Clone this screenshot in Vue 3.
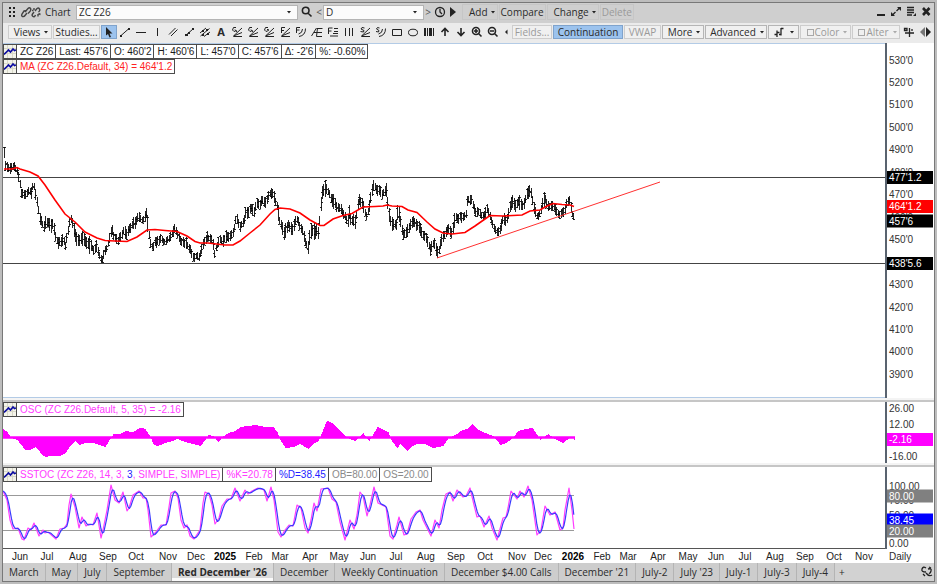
<script setup>
const tools = [
  { name: 'Line', d: 'M2.500 11 11 3.500', fill: 'M2 10h2v2h-2zM10 3h2v2h-2z' },
  { name: 'Horizontal line', d: 'M2 7.500H12' },
  { name: 'Vertical line', d: 'M7.500 3V11' },
  { name: 'Parallel lines', d: 'M3 9.500 9.500 3M5 11 11.500 4.500' },
  { name: 'Segment', d: 'M3 11 11 4', fill: 'M3 9h3v2h-3zM6 7h2v2h-2zM10 3h2v2h-2z' },
  { name: 'Channel', d: 'M2 8 8 3M2.500 11 11.500 3.500M6 11.500 12 7', fill: 'M4 5h2v2h-2zM8 4h2v2h-2zM4 9h2v2h-2zM9 8h2v2h-2z' },
  { name: 'Text', letter: 'A' },
  { name: 'Speed fan', d: 'M3.500 11 12 3M3.500 11 12 7.500M3.500 11.500H12M6 2.500H3.500L2.500 5 4 6.500 6.500 5.500M5 4.500 7 7' },
  { name: 'Percent fan', d: 'M3.500 11 12 3M3.500 11 12 7.500M3.500 11.500H12M6 2.500H3.500L2.500 5 4 6.500 6.500 5.500M5 4.500 7 7' },
  { name: 'Gann fan', d: 'M3.500 11 12 3M3.500 11 12 7.500M3.500 11.500H12M6 2.500H3.500L2.500 5 4 6.500 6.500 5.500V4.500H5' },
  { name: 'Fibonacci fan', d: 'M3.500 11 12 3M3.500 11 12 7.500M3.500 11.500H12M3.500 8V2.500H7M3.500 5.500H6' },
  { name: 'Fibonacci arcs', d: 'M2.500 8V2.500H6M2.500 5H5.500M11.500 3.500Q11.500 10.500 5 11.500M8.500 4Q8.500 8 4.500 9' },
  { name: 'Andrews fork', d: 'M1.500 11 6.500 3M4 7.500H7.500M7.500 3 6.500 11.500M7 3.500H12.500M7 7.500H12M6.500 11.500H12' },
  { name: 'Fibonacci retracement', d: 'M2.500 9V3H6.500M2.500 6H5.500M8 3.500H12M8 6.500H12M7 8.500H12M4 11H12' },
  { name: 'Cycle lines', d: 'M3.500 3V11M7.500 3V11M10.500 3V11' },
  { name: 'Speed resistance fan', d: 'M3.500 11 12 3M3.500 11 12 7.500M3.500 11.500H12M6.500 3 4 2.500 3 4 6 5.500 5.500 7 2.500 6.500' },
  { name: 'Speed resistance arcs', d: 'M5.500 3 3.500 2.500 2.500 4 5 5.500 4.500 7 2 6.500M11.500 3.500Q11.500 10.500 5 11.500M8.500 4Q8.500 8 4.500 9' },
  { name: 'Rectangle', d: 'M2.500 4.500H11.500V10.500H2.500Z' },
  { name: 'Ellipse', d: 'M2.500 7.500A4.500 3.300 0 0 1 11.500 7.500A4.500 3.300 0 0 1 2.500 7.500Z' },
  { name: 'Time bars', d: 'M11.500 3V11', fill: 'M2 3h2v8h-2zM5 3h1v8h-1zM7 3h3v8h-3z' },
  { name: 'Up arrow', d: 'M7 11V4M3.500 7 7 3.500 10.500 7', heavy: true },
  { name: 'Down arrow', d: 'M7 3V10M3.500 7 7 10.500 10.500 7', heavy: true },
  { name: 'Zoom in', d: 'M9.500 6A3.500 3.500 0 1 1 2.500 6A3.500 3.500 0 1 1 9.500 6ZM4 6H8M6 4V8M8.500 8.500 11.500 11.500', heavy: true },
  { name: 'Zoom out', d: 'M9.500 6A3.500 3.500 0 1 1 2.500 6A3.500 3.500 0 1 1 9.500 6ZM4 6H8M8.500 8.500 11.500 11.500', heavy: true },
]

const quote = ['ZC Z26', "Last: 457'6", "O: 460'2", "H: 460'6", "L: 457'0", "C: 457'6", "Δ: -2'6", '%: -0.60%']

const tabs = ['March', 'May', 'July', 'September', "Red December '26", 'December', 'Weekly Continuation',
  'December $4.00 Calls', "December '21", 'July-2', "July '23", 'July-1', 'July-3', 'July-4']
const activeTab = "Red December '26"

const months = [['Jun', 20], ['Jul', 47], ['Aug', 78], ['Sep', 108], ['Oct', 136], ['Nov', 168], ['Dec', 196],
  ['2025', 225], ['Feb', 254], ['Mar', 280], ['Apr', 310], ['May', 339], ['Jun', 368], ['Jul', 396], ['Aug', 426],
  ['Sep', 456], ['Oct', 485], ['Nov', 517], ['Dec', 543], ['2026', 573], ['Feb', 602], ['Mar', 628], ['Apr', 658],
  ['May', 688], ['Jun', 716], ['Jul', 745], ['Aug', 775], ['Sep', 805], ['Oct', 834], ['Nov', 864]]
const monthX = (x) => ((x - 3) / 882) * 100 + '%'

/* The three panes share one canvas coordinate system. */
const panes = {
  price: { top: 43, height: 355 },
  osc: { top: 402, height: 61 },
  stoch: { top: 467, height: 82 },
}
const pct = (pane, y) => ((y - pane.top) / pane.height) * 100 + '%'
const box = (pane) => `3 ${pane.top} 882 ${pane.height}`

const priceLabels = Array.from({ length: 15 }, (_, i) => ({ text: `${530 - i * 10}'0`, y: 59.5 + i * 22.46 }))
  .filter((l) => l.text !== "440'0")
const priceTags = [
  { text: "477'1.2", y: 177, color: '#000' },
  { text: "457'6", y: 220.5, color: '#000' },
  { text: "464'1.2", y: 206, color: '#f00' },
  { text: "438'5.6", y: 263, color: '#000' },
]
const oscLabels = [{ text: '26.00', y: 408.5 }, { text: '12.00', y: 424.5 }, { text: '-16.00', y: 456.5 }]
const oscTags = [{ text: '-2.16', y: 439, color: '#f0f' }]
const stochLabels = [{ text: '100.00', y: 485.5 }, { text: '75.00', y: 500.5 }, { text: '50.00', y: 514.5 }, { text: '0.00', y: 542.5 }]
const stochTags = [
  { text: '80.00', y: 495.5, color: '#808080' },
  { text: '38.45', y: 519.5, color: '#00f' },
  { text: '20.00', y: 530.5, color: '#808080' },
]
const axes = {
  price: { pane: panes.price, labels: priceLabels, tags: priceTags },
  osc: { pane: panes.osc, labels: oscLabels, tags: oscTags },
  stoch: { pane: panes.stoch, labels: stochLabels, tags: stochTags },
}

const pairs = (text) => text.trim().split(/\s+/).map((p) => p.split(',').map(Number))
const STEP = 1.42

function at(points, x, col = 1) {
  if (x <= points[0][0]) return points[0][col]
  for (let i = 1; i < points.length; i++) {
    if (x <= points[i][0]) {
      const a = points[i - 1]
      const b = points[i]
      return a[col] + ((b[col] - a[col]) * (x - a[0])) / (b[0] - a[0])
    }
  }
  return points[points.length - 1][col]
}

/* x, high, low */
const range = pairs(`
4,149,156 5,158,170 7,164,173 9,164,173 11,163,173 13,163,168 15,165,172 17,168,174 19,178,185 21,188,196 23,192,199
25,192,198 27,187,196 29,188,193 31,188,198 33,180,186 34,184,192 36,192,205 38,205,216 40,214,228 42,218,229
44,219,230 46,210,232 48,216,230 50,219,232 53,220,230 55,228,242 57,235,249 59,238,248 61,238,246 63,234,244
65,244,249 67,230,240 69,220,228 71,215,222 73,222,232 75,230,242 77,235,247 79,236,246 82,232,244 84,233,243
86,236,248 88,232,256 90,240,251 92,244,252 94,250,256 96,240,250 98,248,256 100,255,262 102,256,263 104,248,255
106,246,252 108,238,246 110,228,237 112,226,236 114,235,241 116,236,243 118,236,246 120,230,242 122,229,238
124,222,236 126,230,243 128,225,233 130,226,232 132,219,230 134,218,228 136,215,226 138,210,220 140,213,221
142,217,224 144,213,222 146,206,220 148,222,235 150,236,248 152,245,250 154,238,248 156,237,246 158,235,244
160,235,241 163,238,243 165,239,244 167,237,243 170,234,241 173,226,234 175,225,232 177,228,238 179,236,243
181,239,244 184,238,246 186,239,247 188,243,250 190,247,254 192,252,258 194,254,260 196,253,259 198,254,260
200,250,257 201,247,256 203,240,247 205,238,244 207,233,240 209,235,241 211,236,243 213,242,250 214,251,259
216,244,249 218,240,247 220,236,243 222,236,246 224,232,245 226,231,245 228,232,240 230,232,240 232,231,238
234,222,232 236,213,224 238,219,226 240,222,231 242,220,227 244,214,224 246,207,215 248,209,222 250,205,213
252,204,213 254,204,218 256,200,210 258,200,208 260,199,207 262,194,206 264,198,206 266,199,206 268,193,199
270,190,198 272,187,196 274,192,202 276,200,208 278,206,220 280,216,230 282,222,236 284,225,240 286,223,235
288,220,228 290,220,234 292,224,234 294,220,231 296,214,224 298,219,226 300,223,230 302,227,235 304,233,243
306,240,250 308,240,252 310,226,242 312,223,235 314,225,240 316,224,237 318,226,240 320,205,225 321,187,205
323,184,196 325,182,195 327,186,193 329,190,198 331,193,206 333,194,208 335,198,208 337,204,214 339,203,212
341,204,214 343,211,218 345,212,222 347,218,228 349,206,220 351,216,226 353,214,228 355,218,229 357,206,212
358,194,206 360,195,205 362,199,208 364,206,215 366,210,220 368,205,215 370,195,205 372,184,198 374,178,190
376,186,196 378,187,195 380,186,195 382,188,200 384,188,196 386,180,198 388,205,215 390,215,226 392,218,231
394,220,230 396,218,230 398,199,220 400,214,225 402,227,237 404,230,240 406,228,240 408,222,235 410,219,230
412,217,227 414,218,226 416,220,230 418,222,230 420,224,234 422,229,238 424,233,240 426,235,242 428,238,248
430,246,258 432,240,250 434,238,246 436,243,257 438,249,258 440,238,249 442,233,243 444,232,241 446,227,235
448,224,232 450,226,236 452,228,238 454,215,228 456,210,220 458,216,224 460,213,221 462,213,222 464,213,220
466,208,217 467,196,205 469,195,203 471,194,203 473,202,210 475,207,217 477,206,215 479,210,217 481,212,219
483,214,220 485,210,218 487,205,213 489,212,220 491,217,223 493,222,229 495,228,233 497,230,236 499,228,234
501,220,230 503,214,222 505,215,225 507,213,222 509,205,213 511,195,208 513,197,208 515,201,210 517,198,206
519,196,208 521,200,209 523,200,210 525,195,203 527,188,199 529,186,197 531,188,200 533,197,210 535,208,218
537,213,220 539,212,218 541,203,212 543,194,206 545,193,203 547,200,210 549,202,210 551,202,212 553,201,210
555,204,212 557,208,216 559,213,220 561,210,217 563,208,216 565,204,212 567,198,204 569,197,205 571,205,213
572,211,216 574,214,222`)

const bars = (() => {
  let d = ''
  let i = 0
  for (let x = 4.5; x <= 575; x += STEP, i++) {
    const r1 = Math.abs(Math.sin(i * 12.9898) * 43758.5453) % 1
    const r2 = Math.abs(Math.sin(i * 78.233) * 12543.123) % 1
    const hi = at(range, x - 0.5, 1)
    const lo = at(range, x - 0.5, 2)
    const span = lo - hi
    const top = Math.round(hi + span * 0.4 * r1 - 2)
    const end = Math.round(lo - span * 0.4 * r2 + 2)
    const px = Math.floor(x) + 0.5
    const close = Math.round(top + (end - top) * r2) + 0.5
    const open = Math.round(top + (end - top) * r1) + 0.5
    d += `M${px} ${top}V${end}M${px} ${close}h1.500M${px} ${open}h-1.500`
  }
  return d
})()

const average = `4,169 12,169 17,167.5 20,169 30,172 38,176 45,185 55,200 65,214 75,222 85,232 97,238 105,240.5 115,241
127,241.5 137,237 147,230 155,229.5 165,230.5 177,231.5 187,236 195,241.500 200,243 208,243 225,245 233,245 240,241
250,233 260,225 270,214 275,209.500 280,208 290,209 300,213 310,220 320,225.500 324,225.500 333,219 343,215.500
352,213.500 363,207 375,206.500 383,206 387,205 392,206 402,206.500 408,210 417,212.500 427,222 435,229 443,233
452,234 465,232.500 475,226 485,219 490,215.500 503,216 522,215 530,211 540,210 547,206 553,203.500 562,204.500
570,205 574,206.500`

const oscPoints = pairs(`3,429 7,432 11,438 17,440 20,444 25,450 30,450 35,447 38,450 42,455 45,457 50,456 60,456
65,453 70,446 75,441 79,445 85,443 93,443 105,447 108,442 113,434 120,434 125,431 133,432 140,427.5 145,429
150,437 153,444 157,446 165,443 172,441 177,439 185,442 200,446 205,440 208,435 213,436 218,442 222,437 228,433
235,431 240,427 255,425 265,427 273,427 277,432 280,440 285,448 293,447 300,444 303,446 308,449 313,444 318,441
322,432 325,424 327,420.5 332,423 340,431 347,438 355,441 360,436 363,433 366,438 369,441 372,436 377,427 382,429
388,432 392,442 397,448 400,444 403,447 407,451 412,446 417,444 425,444 433,448 443,446 448,438 455,435 462,430
467,429 472,423.5 478,430 485,433 493,436 500,445 506,443 512,438 518,431 525,429 532,428 537,435 540,440 545,436
548,434 553,438 563,443 570,437 573,438 575,441`)
const oscPath = (() => {
  let d = 'M3 437.5'
  for (let x = 3; x <= 574; x += 1) d += `L${x} ${Math.round(at(oscPoints, x))}h1`
  return d + 'V437.500Z'
})()

const kPoints = pairs(`3,491 7,500 10,520 13,529 18,528 22,539 24,540 28,528 31,530 34,523 39,536 43,530 45,533 48,532
56,539 60,529 64,528 67,524 69,505 71,494 75,507 79,528 82,517 86,526 89,524 93,525 97,513 101,538 103,530 107,510
111,485 115,500 119,503 123,492 127,511 129,508 133,495 139,491 143,498 146,498 148,510 151,537 156,532 161,525
166,525 169,507 171,493 175,491 178,498 181,520 184,528 187,525 190,536 194,539 200,530 203,503 205,492 209,494
212,505 215,524 219,518 222,506 227,499 231,499 235,488 240,501 245,490 248,494 252,491 258,488 264,490 267,501
271,487 274,500 278,532 281,537 285,530 289,525 293,526 297,505 301,508 305,528 308,533 311,520 314,503 317,511
319,500 321,489 328,488 332,499 336,502 340,522 345,540 350,520 354,529 357,515 360,492 363,496 367,516 370,505
374,487 378,503 386,507 390,536 393,539 397,525 399,517 404,535 407,534 411,519 416,512 420,510 423,520 431,536
435,520 439,528 442,510 446,494 450,492 453,501 457,490 463,497 466,496 470,488 474,505 477,517 480,516 484,527
489,516 492,528 497,540 503,518 506,517 508,508 511,491 517,499 520,491 524,497 528,486 532,500 537,535 541,530
545,506 550,515 555,512 560,530 563,528 565,510 569,488 572,510 574,529`)
const kLine = kPoints.map((p) => p.join(',')).join(' ')
const dLine = (() => {
  const out = []
  for (let x = 3; x <= 574.5; x += STEP) {
    const y = (at(kPoints, x) + at(kPoints, x - STEP) + at(kPoints, x - 2 * STEP)) / 3
    out.push(`${x.toFixed(1)},${y.toFixed(1)}`)
  }
  return out.join(' ')
})()
</script>

<template>
  <div class="frame">
    <main class="window">
      <header class="title-bar">
        <svg class="ico grip" viewBox="0 0 14 14" aria-hidden="true">
          <path class="solid" d="M4 2h2v2H4zM8 2h2v2H8zM4 6h2v2H4zM8 6h2v2H8zM4 10h2v2H4zM8 10h2v2H8z" />
        </svg>
        <svg class="links" viewBox="0 0 22 14" aria-hidden="true">
          <path d="M5 7 8 3.500Q9.500 2 10.500 3.500T9.500 7L8 8.500M7 5.500 4 6 2 9Q1 11 2.500 11.500T5 10.500L7 8" />
          <path d="M15 6 17 3.500Q18.500 2.500 19.500 4T18.500 7M14 7 12.500 9Q11.500 10.500 13 11.500T15.500 10M14 3V5M12 5.500H13.500M18 9V11.500M18.500 8.500 20.500 9.500" />
        </svg>
        <span class="name">Chart</span>
        <label class="combo symbol">
          <select aria-label="Symbol"><option>ZC Z26</option></select>
          <svg class="caret" viewBox="0 0 6 4" aria-hidden="true"><path d="M1 1H5L3 3.500Z" /></svg>
        </label>
        <button class="plain search" aria-label="Search">
          <svg class="ico" viewBox="0 0 14 14"><path class="thick" d="M9 5.500A3.300 3.300 0 1 1 2.400 5.500A3.300 3.300 0 1 1 9 5.500ZM8.200 8.200 11.500 11.500" /></svg>
        </button>
        <button class="step" aria-label="Previous interval">&lt;</button>
        <label class="combo interval">
          <select aria-label="Interval"><option>D</option></select>
          <svg class="caret" viewBox="0 0 6 4" aria-hidden="true"><path d="M1 1H5L3 3.500Z" /></svg>
        </label>
        <button class="step" aria-label="Next interval">&gt;</button>
        <button class="plain" aria-label="History">
          <svg class="ico" viewBox="0 0 14 14"><path class="mid" d="M11.500 7A4.500 4.500 0 1 1 2.500 7A4.500 4.500 0 1 1 11.500 7ZM7 4V7L9 9" /></svg>
        </button>
        <button class="plain play" aria-label="Play">
          <svg class="ico" viewBox="0 0 14 14"><path class="solid" d="M4 2 10 7 4 12Z" /></svg>
        </button>
        <div class="actions">
          <button class="flat wide">Add<svg class="caret" viewBox="0 0 6 4"><path d="M1 1H5L3 3.500Z" /></svg></button>
          <button class="flat">Compare</button>
          <button class="flat wide">Change<svg class="caret" viewBox="0 0 6 4"><path d="M1 1H5L3 3.500Z" /></svg></button>
          <button class="flat" disabled>Delete</button>
        </div>
        <div class="controls">
          <button class="plain" aria-label="Minimize"><svg class="ico" viewBox="0 0 14 14"><path class="solid" d="M3 9H11V11H3Z" /></svg></button>
          <button class="plain" aria-label="Maximize"><svg class="ico" viewBox="0 0 14 14"><path class="mid" d="M7.500 6 11 2.500M3 10.500 6.500 7" /><path class="solid" d="M8 2H12V6ZM2 7V11H6Z" /></svg></button>
          <button class="plain" aria-label="Menu"><svg class="ico" viewBox="0 0 14 14"><path class="mid" d="M3 2.500H10M3 5H10M3 7.500H10M3 10H8" /><path class="solid" d="M12 8V11H9Z" /></svg></button>
          <button class="plain" aria-label="Close"><svg class="ico" viewBox="0 0 14 14"><path class="fat" d="M4 3 10.500 10M10.500 3 4 10" /></svg></button>
        </div>
      </header>

      <nav class="toolbar" aria-label="Chart tools">
        <button class="boxed views">Views<svg class="caret" viewBox="0 0 6 4"><path d="M1 1H5L3 3.500Z" /></svg></button>
        <button class="boxed studies">Studies...</button>
        <button class="tool selected" aria-label="Select">
          <svg class="ico" viewBox="0 0 14 14"><path class="solid" d="M4 2V10.500L6 9 7.500 12.500 9 12 7.500 8.500H10.500Z" /></svg>
        </button>
        <button v-for="t in tools" :key="t.name" class="tool" :aria-label="t.name">
          <span v-if="t.letter" class="letter">{{ t.letter }}</span>
          <svg v-else class="ico" viewBox="0 0 14 14">
            <path :class="{ thick: t.heavy }" :d="t.d" />
            <path v-if="t.fill" class="solid" :d="t.fill" />
          </svg>
        </button>
        <svg class="back" viewBox="0 0 6 10" aria-hidden="true"><path class="solid" d="M4.500 2.500V7.500L2 5Z" /></svg>
        <button class="boxed fields" disabled>Fields...</button>
        <button class="boxed continuation">Continuation</button>
        <button class="boxed vwap" disabled>VWAP</button>
        <button class="boxed more">More<svg class="caret" viewBox="0 0 6 4"><path d="M1 1H5L3 3.500Z" /></svg></button>
        <button class="boxed advanced">Advanced<svg class="caret" viewBox="0 0 6 4"><path d="M1 1H5L3 3.500Z" /></svg></button>
        <button class="boxed bar-style" aria-label="Bar style">
          <svg class="ico" viewBox="0 0 14 14"><path class="mid" d="M5 5.500V12M2.500 9.500H5M5 7.500H7.500M9 3V10.500M7 9.500H9M9 3.500H11.500" /></svg>
          <svg class="caret" viewBox="0 0 6 4"><path d="M1 1H5L3 3.500Z" /></svg>
        </button>
        <label class="boxed check color"><input type="checkbox" disabled />Color<svg class="caret" viewBox="0 0 6 4"><path d="M1 1H5L3 3.500Z" /></svg></label>
        <label class="boxed check alter"><input type="checkbox" disabled />Alter<svg class="caret" viewBox="0 0 6 4"><path d="M1 1H5L3 3.500Z" /></svg></label>
        <button class="tool crosshair" aria-label="Crosshair">
          <svg class="ico" viewBox="0 0 14 14"><path class="mid" d="M7.500 3V12M3 8H12M2.500 3.500H5V5.500H2.500ZM10 4V6" /></svg>
        </button>
        <button class="tool scroll" aria-label="Scroll tools">
          <svg class="ico" viewBox="0 0 14 14"><path class="dim" d="M6 2V12L1 7Z" /><path class="solid" d="M7 2V12L12 7Z" /></svg>
        </button>
      </nav>

      <section class="pane price">
        <div class="plot outlined">
          <svg class="canvas" :viewBox="box(panes.price)" preserveAspectRatio="none" role="img" aria-label="Price chart">
            <path class="level" d="M3 177.500H885M3 263.500H885" />
            <path class="bars" :d="bars" />
            <polyline class="average" :points="average" />
            <path class="trend" d="M437 258 660 182" />
          </svg>
          <div class="legends">
            <div class="legend">
              <span class="cell mark"><svg viewBox="0 0 12 13"><path class="grid" d="M0 3.500H12M0 8.500H12M3.500 0V13M8.500 0V13" /><path class="wave" d="M0 9.500 3 6.500 4.500 5 6.500 7 9 4 10.500 5.500 12 5" /></svg></span>
              <span v-for="q in quote" :key="q" class="cell">{{ q }}</span>
            </div>
            <div class="legend red">
              <span class="cell mark"><svg viewBox="0 0 12 13"><path class="grid" d="M0 3.500H12M0 8.500H12M3.500 0V13M8.500 0V13" /><path class="wave" d="M0 9.500 3 6.500 4.500 5 6.500 7 9 4 10.500 5.500 12 5" /></svg></span>
              <span class="cell">MA (ZC Z26.Default, 34) = 464'1.2</span>
            </div>
          </div>
        </div>
        <svg class="axis">
          <text v-for="l in axes.price.labels" :key="l.text" x="2" :y="pct(panes.price, l.y)" dy="4">{{ l.text }}</text>
          <g v-for="t in axes.price.tags" :key="t.text">
            <rect x="0" :y="pct(panes.price, t.y - 6)" width="46" height="13" :fill="t.color" />
            <text class="on" x="2" :y="pct(panes.price, t.y)" dy="4">{{ t.text }}</text>
          </g>
        </svg>
      </section>

      <div class="splitter"></div>

      <section class="pane osc">
        <div class="plot">
          <svg class="canvas" :viewBox="box(panes.osc)" preserveAspectRatio="none" role="img" aria-label="Oscillator">
            <path class="histogram" :d="oscPath" />
            <path class="zero" d="M3 437.500H575" />
          </svg>
          <div class="legends">
            <div class="legend pink">
              <span class="cell mark"><svg viewBox="0 0 12 13"><path class="grid" d="M0 3.500H12M0 8.500H12M3.500 0V13M8.500 0V13" /><path class="wave" d="M0 9.500 3 6.500 4.500 5 6.500 7 9 4 10.500 5.500 12 5" /></svg></span>
              <span class="cell">OSC (ZC Z26.Default, 5, 35) = -2.16</span>
            </div>
          </div>
        </div>
        <svg class="axis">
          <text v-for="l in axes.osc.labels" :key="l.text" x="2" :y="pct(panes.osc, l.y)" dy="3">{{ l.text }}</text>
          <g v-for="t in axes.osc.tags" :key="t.text">
            <rect x="0" :y="pct(panes.osc, t.y - 6)" width="46" height="13" :fill="t.color" />
            <text class="on" x="2" :y="pct(panes.osc, t.y)" dy="4">{{ t.text }}</text>
          </g>
        </svg>
      </section>

      <div class="splitter"></div>

      <section class="pane stoch">
        <div class="plot">
          <svg class="canvas" :viewBox="box(panes.stoch)" preserveAspectRatio="none" role="img" aria-label="Slow stochastic">
            <path class="bound" d="M3 495.500H574M3 530.500H574" />
            <polyline class="k" :points="kLine" />
            <polyline class="d" :points="dLine" />
          </svg>
          <div class="legends">
            <div class="legend pink">
              <span class="cell mark"><svg viewBox="0 0 12 13"><path class="grid" d="M0 3.500H12M0 8.500H12M3.500 0V13M8.500 0V13" /><path class="wave" d="M0 9.500 3 6.500 4.500 5 6.500 7 9 4 10.500 5.500 12 5" /></svg></span>
              <span class="cell">SSTOC (ZC Z26, 14, 3, <span class="blue">3</span>, SIMPLE, SIMPLE)</span>
              <span class="cell">%K=20.78</span>
              <span class="cell blue">%D=38.45</span>
              <span class="cell grey">OB=80.00</span>
              <span class="cell grey">OS=20.00</span>
            </div>
          </div>
        </div>
        <svg class="axis">
          <text v-for="l in axes.stoch.labels" :key="l.text" x="2" :y="pct(panes.stoch, l.y)" dy="4">{{ l.text }}</text>
          <g v-for="t in axes.stoch.tags" :key="t.text">
            <rect x="0" :y="pct(panes.stoch, t.y - 6)" width="46" height="13" :fill="t.color" />
            <text class="on" x="2" :y="pct(panes.stoch, t.y)" dy="4">{{ t.text }}</text>
          </g>
        </svg>
      </section>

      <div class="dates">
        <svg class="months">
          <text v-for="(m, i) in months" :key="i" :class="{ year: m[0].startsWith('20') }" :x="monthX(m[1])" y="11">{{ m[0] }}</text>
        </svg>
        <span class="period">Daily</span>
      </div>

      <footer class="tabs">
        <button v-for="t in tabs" :key="t" class="tab" :class="{ active: t === activeTab }">{{ t }}</button>
        <button class="tab add" aria-label="Add tab">+</button>
        <svg class="ico linker" viewBox="0 0 14 14" aria-hidden="true"><path class="mid" d="M6 3Q3 1 2 4T6 7M8 4Q12 3 11 6T9 8M6 8Q9 12 12 10M3 9 5 11M9 2 11 3" /></svg>
      </footer>
    </main>
  </div>
</template>

<style>
body {
  margin: 0;
  background: #bdbdbd;
}
</style>

<style scoped>
.frame {
  box-sizing: border-box;
  min-height: 100vh;
  padding: 2px;
  display: flex;
  font: 10px/12px "Open Sans", "Noto Sans", sans-serif;
  color: #2b2b2b;
}
.window {
  flex: 1;
  min-width: 0;
  display: flex;
  flex-direction: column;
  border: 1px solid #787878;
  background: #f2f2f2;
}
button, select {
  font: inherit;
  color: inherit;
  margin: 0;
  padding: 0;
  border: 0;
  background: none;
}
button:disabled { color: #9a9a9a; }
svg { display: block; flex: none; }
path, polyline {
  fill: none;
  stroke: #222;
  stroke-width: 1;
}
.ico { width: 14px; height: 14px; }
.mid { stroke-width: 1.3; }
.thick { stroke-width: 1.6; }
.fat { stroke-width: 2.6; }
.solid { fill: #222; stroke: none; }
.dim { fill: #777; stroke: none; }
.caret { width: 6px; height: 4px; }
.caret path { fill: #222; stroke: none; }

.title-bar {
  height: 20px;
  box-sizing: border-box;
  padding: 0 1px 2px 2px;
  display: flex;
  align-items: center;
  background: #cfcfcf;
}
.links { width: 22px; height: 14px; margin: 0 3px 0 1px; }
.links path { stroke-width: 1.4; stroke: #444; }
.name { width: 31px; }
.combo {
  display: grid;
  align-items: center;
  box-sizing: border-box;
  height: 15px;
  border: 1px solid #b4b4b4;
  background: #fbfbfb;
}
.combo select {
  grid-area: 1 / 1;
  appearance: none;
  width: 100%;
  height: 13px;
  padding-left: 2px;
  outline: none;
}
.combo .caret { grid-area: 1 / 1; justify-self: end; margin-right: 5px; }
.symbol { width: 222px; }
.interval { width: 101px; }
.plain { width: 15px; display: flex; justify-content: center; }
.search { width: 17px; }
.step { width: 8px; height: 15px; color: #555; }
.play { width: 12px; }
.actions { display: flex; gap: 1px; margin-left: 3px; }
.flat {
  height: 16px;
  padding: 0 1px;
  display: flex;
  align-items: center;
  gap: 2px;
  border: 1px solid #c6c6c6;
}
.wide { padding-left: 6px; }
.controls { display: flex; margin-left: auto; }

.toolbar {
  height: 20px;
  box-sizing: border-box;
  padding: 0 0 2px 5px;
  display: flex;
  align-items: center;
  background: #ebebeb;
}
.boxed {
  box-sizing: border-box;
  height: 14px;
  flex: none;
  margin-right: 1px;
  display: flex;
  align-items: center;
  justify-content: center;
  gap: 3px;
  border: 1px solid #cdcdcd;
  background: #f0f0f0;
  white-space: nowrap;
}
.views { width: 44px; padding-left: 3px; }
.studies { width: 47px; }
.tool {
  width: 16px;
  height: 14px;
  flex: none;
  display: flex;
  align-items: center;
  justify-content: center;
}
.selected { background: #9cc3ee; outline: 1px solid #7fa3cc; outline-offset: -1px; }
.letter { font: bold 11px/14px "Noto Sans", sans-serif; }
.back { width: 6px; height: 10px; margin: 0 3px 0 2px; }
.fields { width: 40px; }
.continuation { width: 70px; background: #9cc3ee; border-color: #7fa3cc; }
.vwap { width: 37px; }
.more { width: 42px; padding-left: 3px; border-color: #b5b5b5; }
.advanced { width: 62px; padding-left: 3px; border-color: #b5b5b5; }
.bar-style { width: 31px; border-color: #b5b5b5; }
.color { width: 51px; padding-left: 4px; }
.alter { width: 48px; padding-left: 4px; }
.check { color: #9a9a9a; gap: 1px; }
.check input {
  appearance: none;
  width: 7px;
  height: 7px;
  margin: 0;
  box-sizing: border-box;
  border: 1px solid #a8a8a8;
}
.check .caret { margin-left: 2px; }
.check .caret path { fill: #aaa; }
.scroll { margin-left: auto; }

.pane { display: flex; min-height: 0; background: #fff; }
.price { flex: 355 0 0; }
.osc { flex: 61 0 0; }
.stoch { flex: 82 0 0; }
.plot {
  position: relative;
  flex: 1;
  min-width: 0;
}
.outlined { box-shadow: inset 0 1px #b3cbe6, inset 0 -1px #b3cbe6; }
.canvas {
  position: absolute;
  width: 100%;
  height: 100%;
}
.stoch .plot { box-shadow: inset 0 -1px #555; }
.axis {
  width: 47px;
  height: auto;
  border-left: 2px solid #59636f;
  overflow: hidden;
}
.axis text, .months text {
  font: 10px "Liberation Sans", Arial, sans-serif;
  fill: #333;
}
.axis .on { fill: #fff; }
.splitter {
  height: 4px;
  box-sizing: border-box;
  border-top: 2px solid #f4f4f4;
  background: #c6c6c6;
}

.level { stroke: #444; }
.bars { stroke: #000; stroke-opacity: 0.85; }
.average { stroke: #f00; stroke-width: 1.6; }
.trend { stroke: #ff3030; }
.histogram { fill: #f0f; stroke: none; }
.zero { stroke: #f0f; stroke-width: 2.4; }
.bound { stroke: #999; }
.k { stroke: #ff3cff; stroke-width: 1.2; stroke-linejoin: round; }
.d { stroke: #3a3aff; stroke-width: 1.2; stroke-linejoin: round; }

.legends {
  position: absolute;
  top: 0;
  left: 0;
  display: flex;
  flex-direction: column;
  align-items: flex-start;
}
.price .legends { top: 1px; }
.legend {
  display: flex;
  border: 1px solid #4c4c4c;
  background: #fff;
  font: 10px/13px "Liberation Sans", Arial, sans-serif;
  color: #1c1c1c;
  white-space: nowrap;
}
.cell { padding: 0 2px 0 3px; }
.cell + .cell { border-left: 1px solid #4c4c4c; }
.cell.mark { padding: 0; width: 12px; background: #f3f3ea; }
.mark svg { width: 12px; height: 13px; }
.grid { stroke: #d8d8c8; }
.wave { stroke: #0a0aa0; stroke-width: 1.6; }
.red { color: #f22; }
.pink { color: #ff3cff; }
.blue { color: #2222ff; }
.grey { color: #8a8a8a; }

.dates { height: 14px; display: flex; background: #fff; }
.months { flex: 1; min-width: 0; height: 14px; }
.months text { text-anchor: middle; fill: #222; }
.months .year { font-weight: bold; fill: #000; }
.period {
  width: 45px;
  padding-left: 4px;
  font: 10px/16px "Liberation Sans", Arial, sans-serif;
}

.tabs {
  height: 18px;
  display: flex;
  background: #d2d2d2;
  overflow: hidden;
}
.tab {
  flex: none;
  box-sizing: border-box;
  padding: 0 6px;
  border-right: 1px solid #b4b4b4;
  background: #cdcdcd;
  white-space: nowrap;
}
.active {
  background: #d9d9d9;
  font-weight: bold;
  box-shadow: inset 0 -3px #fafafa;
}
.add { padding: 0 4px; border-right: 0; background: none; }
.linker { margin: 2px 0 0 auto; }
</style>
